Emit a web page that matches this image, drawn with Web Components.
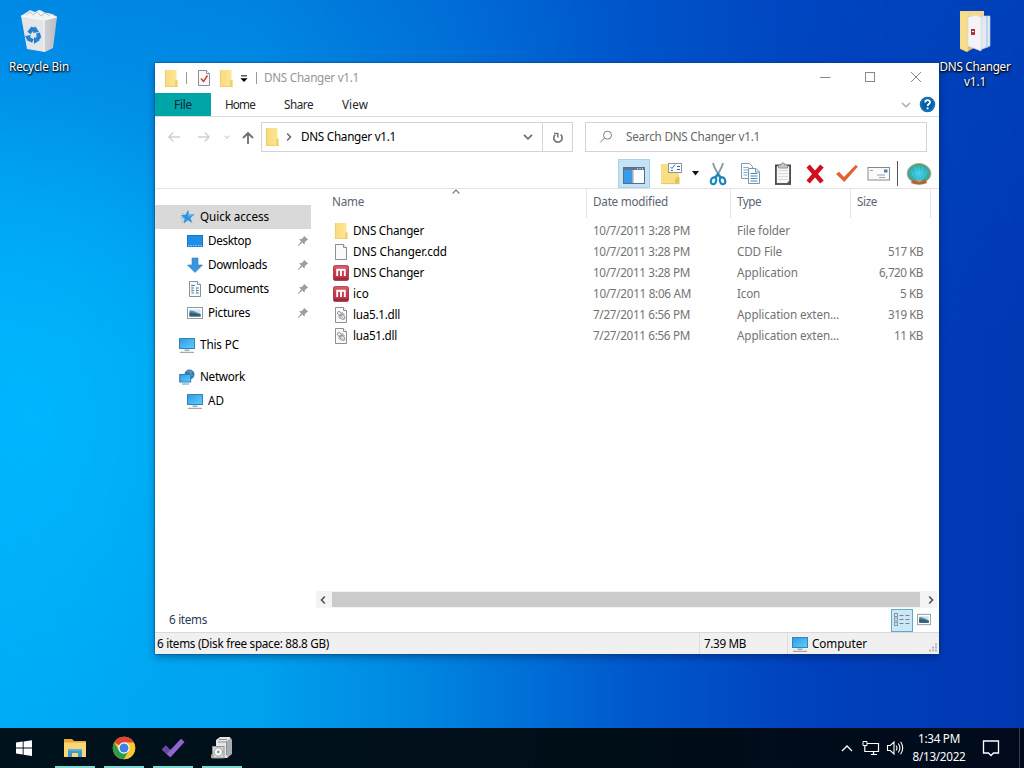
<!DOCTYPE html>
<html lang="en">
<head>
<meta charset="utf-8">
<title>DNS Changer v1.1</title>
<style>
html,body{margin:0;height:768px;overflow:hidden}
body{font:11.7px/16px "Noto Sans","Open Sans",sans-serif;color:#000}
</style>
</head>
<body>
<win-desktop></win-desktop>
<script>
const MON = `<linearGradient id="m" x1="0" y1="0" x2="1" y2="1"><stop stop-color="#2e9be4"/><stop offset="1" stop-color="#62cdfb"/></linearGradient>`;
const FOLDER = `<linearGradient id="f" x1="0" x2="1"><stop stop-color="#f8da80"/><stop offset="1" stop-color="#ffe795"/></linearGradient><path d="M2 0h11.500v9.500h1V16H2z" fill="url(#f)"/><path d="M12.500 9.500h2V16h-2.500v-4z" fill="#f0d06c"/><path d="M2.400 0v16" stroke="#e8c970" stroke-width=".8"/><path d="M2 15.600h12.500" stroke="#e8c970" stroke-width=".8"/>`;
const PAGE = `<path d="M2.500 .5h8l3 3v12h-11z" fill="#fafafa" stroke="#8b8f94"/><path d="M10.500 .5v3h3" fill="#fff" stroke="#8b8f94"/>`;
const ICONS = {
 folder:[16,16,FOLDER],
 page:[16,16,PAGE],
 prop:[16,16,PAGE+`<path d="M5 8.500l2.500 3 4-6" fill="none" stroke="#c94a38" stroke-width="1.600"/>`],
 dll:[16,16,PAGE+`<g fill="none" stroke="#93989d"><ellipse cx="6.600" cy="6.600" rx="2.400" ry="1.600" transform="rotate(40 6.600 6.600)"/><ellipse cx="9.200" cy="9.800" rx="3" ry="2" transform="rotate(45 9.200 9.800)"/><path d="M5 9.500l2.500 2.500M9 5l2.500 3M7.500 7.500l3 4" stroke-width=".9"/></g>`],
 app:[16,16,`<linearGradient id="r" x1="0" y1="0" x2="0" y2="1"><stop stop-color="#e0606c"/><stop offset=".45" stop-color="#c8384a"/><stop offset="1" stop-color="#b43448"/></linearGradient><rect x=".4" y=".4" width="15.200" height="15.200" rx="2.200" fill="url(#r)" stroke="#8e2836" stroke-width=".8"/><path d="M1 13.800h14" stroke="#8a2a3c" stroke-width="1.400"/><path d="M4.200 11V4M8 11V5M11.800 11V5M3.300 4.800h9.400" fill="none" stroke="#fff" stroke-width="1.900"/>`],
 star:[16,16,`<path d="M9 1l1.400 4.700 5.200-.4-4.200 3.600 2 5.100-4.600-2.700-4 3.300.8-5.200L1.800 6.200l4.800-.5z" fill="#2f93dc"/><path d="M9 1l1.400 4.700 5.200-.4-6.500 3z" fill="#5db4ee"/><path d="M1.500 8.500l3.500 1M2.500 13l2.500-1.500M3 4.500l2.500.8" stroke="#7dbcea" stroke-width=".9"/>`],
 desktop:[16,16,`<rect x=".5" y="2.500" width="15" height="11" fill="#1e90ea" stroke="#1976c0"/><path d="M1 12.800h14" stroke="#b8e0fa" stroke-width=".9" stroke-dasharray="1.500 1"/>`],
 down:[16,16,`<path d="M5 1h6v7h4.500L8 15.500.5 8H5z" fill="#3c94dc" stroke="#2f7fc4" stroke-width=".6"/>`],
 doc:[16,16,PAGE+`<path d="M4.500 4.500h3.500M4.500 7h2.500M9 7h2.800M4.500 9.500h2.500M9 9.500h2.800M4.500 12h2.500M9 12h2.800" stroke="#4a88ad" stroke-width="1.200"/><path d="M5 3v8M9.500 6.500v6" stroke="#5b97b8" stroke-width=".6"/>`],
 pic:[16,16,`<rect x=".5" y="2.500" width="15" height="11" fill="#fff" stroke="#9199a2"/><path d="M2.500 4.500h11v7h-11z" fill="#cce4f4"/><path d="M2.500 5.500c3-.5 6 1.500 11 3.300v2.700h-11z" fill="#5f8fb0"/><path d="M2.500 7.500c3-.5 7 1.500 11 2v2h-11z" fill="#365e72"/>`],
 pc:[16,16,MON+`<rect x=".5" y="1.500" width="15" height="10" fill="url(#m)" stroke="#3882ba"/><path d="M5.500 13.200h5" stroke="#74aed0" stroke-width="1.400"/><path d="M1 15.300h14" stroke="#9b8f94" stroke-width="1"/>`],
 net:[16,16,MON+`<circle cx="10.500" cy="5.500" r="5" fill="#3c77a9"/><path d="M8 2l3 1 1 3 2 1M11 1l2 3" stroke="#6fa3c8" stroke-width="1" fill="none"/><rect x=".7" y="5.500" width="11" height="7.500" fill="url(#m)" stroke="#2e7fbd"/><path d="M3 15h7" stroke="#5c95b8" stroke-width="1"/>`],
 pin:[12,12,`<path d="M7 .8l4.200 4-1.700.6-1.700 1.800-.2 2.600L5.400 7.600 1.200 11l-.4-.4 3.400-4.200L2 4.200l2.800-.2 1.700-1.700z" fill="#9a9ea2"/>`],
 back:[14,12,`<path d="M13 6H2M6.300 1.500L1.800 6l4.500 4.500" fill="none" stroke="#cfcfcf" stroke-width="1.300"/>`],
 fwd:[14,12,`<path d="M1 6h11M7.700 1.500L12.200 6l-4.500 4.500" fill="none" stroke="#cfcfcf" stroke-width="1.300"/>`],
 up:[14,14,`<path d="M7 13V2.500M2 7l5-5 5 5" fill="none" stroke="#6e6e6e" stroke-width="1.800"/>`],
 chev:[10,6,`<path d="M1 .8l4 4 4-4" fill="none" stroke="currentColor" stroke-width="1.700"/>`],
 right:[6,10,`<path d="M1.200 1.500L4.500 5 1.200 8.500" fill="none" stroke="currentColor" stroke-width="1.600"/>`],
 sort:[8,5,`<path d="M.6 4.500L4 1l3.400 3.500" fill="none" stroke="#777" stroke-width="1.100"/>`],
 refresh:[12,12,`<path d="M3.200 2.800A4.200 4.200 0 1 0 8.600 2.700" fill="none" stroke="#777" stroke-width="1.700"/><path d="M2 1.600h3.800v3.800" fill="none" stroke="#777" stroke-width="1.500"/>`],
 search:[14,14,`<circle cx="8.500" cy="5.200" r="4" fill="none" stroke="#808080"/><path d="M5.600 8L1.200 12.500" stroke="#808080"/>`],
 menu:[8,8,`<path d="M1 .8h6" stroke="#333" stroke-width="1.200"/><path d="M.4 3.300h7.200L4 7z" fill="#000"/>`],
 tri:[8,5,`<path d="M0 0h8L4 4.600z" fill="#111"/>`],
 min:[12,12,`<path d="M1 6.500h10.500" stroke="#888"/>`],
 max:[12,12,`<rect x="1.500" y="1.500" width="9" height="9" fill="none" stroke="#888"/>`],
 close:[12,12,`<path d="M1 1l10 10M11 1L1 11" stroke="#858585"/>`],
 help:[18,18,`<circle cx="9" cy="9" r="8.200" fill="#075fa8"/><circle cx="9" cy="9" r="7" fill="none" stroke="#2884c4"/><path d="M6.500 7c0-3.400 5.200-3.200 5.200-.4 0 1.900-2.600 1.900-2.600 4" fill="none" stroke="#fff" stroke-width="1.900"/><circle cx="9.100" cy="13" r="1.200" fill="#fff"/>`],
 pane:[24,20,`<rect x="1.500" y="1.500" width="21" height="16" fill="#fff" stroke="#5c6f80"/><path d="M1.500 3h21" stroke="#60788c" stroke-width="2"/><path d="M2 4h8.500v13H2z" fill="#379bea"/><path d="M11 4v13" stroke="#8a9aa8"/><path d="M15 2.800h1M17.500 2.800h1M20 2.800h1" stroke="#fff"/>`],
 select:[24,24,`<path d="M1 2h18v20H1z" fill="#fadf82"/><path d="M17 15h2.500v7H15v-4z" fill="#e5c357"/><path d="M1 21.600h18" stroke="#e5c770"/><rect x="8.500" y="1.500" width="13" height="9" fill="#fff" stroke="#8896a4"/><path d="M10.500 5l1.500 1.500 3-4M17 4.500h3M17 7.500h3M11 8.500h2" stroke="#3e6d9d" fill="none"/>`],
 cut:[20,24,`<path d="M5 1l1.300 4 5.700 11M15 1l-1.300 4-5.700 11" fill="none" stroke="#8b98a3" stroke-width="1.900"/><g fill="none" stroke="#1485bd" stroke-width="2.100"><ellipse cx="5.500" cy="18.800" rx="2.600" ry="3.500" transform="rotate(20 5.500 18.800)"/><ellipse cx="14.500" cy="18.800" rx="2.600" ry="3.500" transform="rotate(-20 14.500 18.800)"/><path d="M7 15.500l3-3.500 3 3.500"/></g>`],
 copy:[22,24,`<path d="M1.500 1.500h8l3 3v12h-11z" fill="#fff" stroke="#8799a8"/><path d="M3.500 5.500h5M3.500 8h6M3.500 10.500h4M3.500 13h4" stroke="#7aaccf"/><path d="M8.500 6.500h7.500l3.500 3.500v11.500h-11z" fill="#fff" stroke="#7e93a5"/><path d="M15.500 6.500V10h4" fill="none" stroke="#7e93a5"/><path d="M10.500 11.500h7M10.500 14h7M10.500 16.500h7M10.500 19h7" stroke="#3c8bc5"/>`],
 paste:[18,24,`<rect x="1.900" y="3.400" width="14.200" height="18.600" fill="#f7f7f7" stroke="#4a4a4a" stroke-width="1.800"/><path d="M4 8.500h10M4 11.500h10M4 14.500h10M4 17.500h10" stroke="#d6dde2"/><path d="M4.500 6V3H7l1-2h2l1 2h2.500v3z" fill="#c6cacc" stroke="#7f8285" stroke-width=".8"/><path d="M12 22l4-4v4z" fill="#555"/>`],
 del:[20,20,`<path d="M1.500 3.600L4.800.6l5.200 6 5.200-6L18.700 3.600 13 10l5.700 6.400-3.400 3-5.300-6-5.200 6-3.300-3L7 10z" fill="#d20f20"/>`],
 check:[24,20,`<path d="M1 10.500l3-2.400 5 5.600L20.500 1 23 2.700 9.300 19z" fill="#e2622e"/>`],
 mail:[24,16,`<rect x="1" y="1.500" width="21.500" height="12.500" fill="#fafafa" stroke="#85898f"/><rect x="17" y="3.500" width="3.500" height="3" fill="#4d83b4"/><path d="M3 4.500h3M10 9h8M12 11.500h6" stroke="#97a3b3"/>`],
 shell:[26,24,`<radialGradient id="s" cx=".5" cy=".55"><stop stop-color="#45cdf0"/><stop offset=".65" stop-color="#2cb5bf"/><stop offset="1" stop-color="#5a9a78"/></radialGradient><path d="M6 19C2 17 .5 13 1.500 9.500 2.500 5.500 7 1.500 13 1.500s10.500 4 11.500 8C25.500 13 24 17 20 19z" fill="url(#s)" stroke="#9aa878" stroke-width=".8"/><path d="M11 19L5 9M12 19L9 5M13 19V4M14 19l3-14M15 19l6-10" stroke="#60dcea" stroke-opacity=".5" fill="none"/><path d="M6 18h3q4 3 8 0h3l1 3q-8 3.500-16 0z" fill="#b0683a"/>`],
 details:[18,14,`<g fill="none" stroke="#8a93a8"><rect x="1.500" y=".5" width="3" height="3"/><rect x="1.500" y="5" width="3" height="3"/><rect x="1.500" y="9.500" width="3" height="3"/></g><path d="M6.500 2.500h4M12.500 2.500h4M6.500 6.500h4M12.500 6.500h4M6.500 10.500h4M12.500 10.500h4" stroke="#71868f" stroke-width="1.200"/>`],
 grip:[10,10,`<path d="M7 1.500h2M4 4.500h2M7 4.500h2M1 7.500h2M4 7.500h2M7 7.500h2" stroke="#b6b6b6" stroke-width="2"/>`],
 bin:[42,46,`<linearGradient id="b" x1="0" x2="1"><stop stop-color="#e2e5e8"/><stop offset=".62" stop-color="#e4e6e9"/><stop offset=".66" stop-color="#cdd1d4"/><stop offset="1" stop-color="#b9bdc1"/></linearGradient><path d="M3 8l5-3 4-3 5 2 5-2 6 3 7 1 4 3-4 31-8 4-18-3z" fill="url(#b)"/><path d="M3 8l23 4 13-3-9-4-5 0-4-3-5 3-5-2z" fill="#f1f3f4"/><path d="M8 7l4-3 3 3 4-3 4 4 4-3 5 3" fill="none" stroke="#bcc2c8"/><path d="M3 8l23 4 13-3M26 12v32" fill="none" stroke="#f9fafb"/><g fill="none" stroke="#267fd0" stroke-width="4"><path d="M11 25l3-4 4 1M20 25l1 4-2 2M15 33l-4-2-1-2"/></g><path d="M17 18l4 6-6 1zM16 29v7l6-4zM7 28l6-1-3 6z" fill="#267fd0"/>`],
 bigfolder:[34,44,`<path d="M2 1h24v31L9 42l-7-3z" fill="#e2bd62"/><path d="M3 1h23v5H10v35l-7-3z" fill="#f5d986"/><path d="M23 6l9 0v30l-10 4z" fill="#e3e9ef" stroke="#c4ccd5" stroke-width=".6"/><path d="M29 6v32" stroke="#8cc2ef"/><path d="M10 7l8-2 5 2v34L10 36z" fill="#f4f4f6" stroke="#d3d6d9" stroke-width=".6"/><path d="M2 1l7 3v38l-7-4z" fill="#f6dc8d"/><rect x="13" y="19" width="4" height="6" fill="#bd2f39"/><path d="M14 21.500h2" stroke="#fff"/>`],
 start:[18,18,`<path d="M1 3.600l6.700-1v6H1zM8.600 2.400L17 1.200v7.400H8.600zM1 9.500h6.700v6L1 14.500zM8.600 9.500H17V17l-8.400-1.300z" fill="#fff"/>`],
 explorer:[24,20,`<path d="M1 1h8l2 2h12v16H1z" fill="#e9aa35"/><path d="M1 4.500h22V19H1z" fill="#fbd674"/><path d="M5 19v-8h14v8h-4v-4H9v4z" fill="#3c9acf"/><path d="M5 11h14v2H5z" fill="#57b3dd"/>`],
 chrome:[24,24,`<circle cx="12" cy="12" r="11.200" fill="#fbc72e"/><path d="M12 12L2.300 6.400A11.200 11.200 0 0 1 21.700 6.400L12 6.400z" fill="#e14335"/><path d="M12 .8a11.200 11.200 0 0 1 9.700 5.600H12z" fill="#e14335"/><path d="M2.300 6.400A11.200 11.200 0 0 0 12 23.200l4.900-8.400L7.200 14.800z" fill="#2b9a4b"/><path d="M12 6.400h9.700A11.200 11.200 0 0 1 12 23.200l4.900-8.400z" fill="#fbc72e"/><circle cx="12" cy="12" r="5.700" fill="#fff"/><circle cx="12" cy="12" r="4.500" fill="#3b80ec"/>`],
 todo:[24,20,`<path d="M.8 11.500l4-4 4.500 4.500L20 .8 23.500 4 9.300 19.500z" fill="#9265cc"/><path d="M.8 11.500l4-4 4.500 4.500-3.700 4z" fill="#6b45a4"/>`],
 disc:[24,24,`<path d="M6 4l4-3h10l1 3v14l-4 4H6z" fill="#e4e6e7"/><path d="M17 5l4-3 1 2v14l-5 4z" fill="#a9adb0"/><path d="M9 3.500h8M8 6h8M16.500 5v14" stroke="#8b8d90"/><rect x="2.500" y="10.500" width="11.500" height="11.500" fill="#d8d9d9" stroke="#909296"/><circle cx="8.300" cy="16" r="4.200" fill="#fafafa" stroke="#96999b"/><circle cx="8.300" cy="16" r="1.400" fill="#8f9598"/><path d="M1 18.500h3v3.500H1z" fill="#b7a981"/>`],
 trayup:[12,8,`<path d="M1 7l5-5 5 5" fill="none" stroke="#fff" stroke-width="1.300"/>`],
 lan:[18,16,`<path d="M5 3.500h11.500v8H6M9 14.500h6M11.500 11.500v3M2.800 6v5.500h3.700" fill="none" stroke="#fff" stroke-width="1.200"/><path d="M1 1.500h4v4H1z" fill="#071019" stroke="#fff"/>`],
 vol:[18,16,`<path d="M1.500 5.500h2.800L8 2v12l-3.700-3.500H1.500zM10 5.500q2 2.500 0 5M12.300 3.500q3.200 4.500 0 9M14.600 1.800q4.200 6.200 0 12.400" fill="none" stroke="#fff" stroke-width="1.100"/>`],
 note:[18,18,`<path d="M1.500 2h15v12h-5l-2.500 2.500L6.500 14h-5z" fill="none" stroke="#fff" stroke-width="1.300"/>`]
};

// <win-icon name w h>: inline SVG from the table above
customElements.define('win-icon', class extends HTMLElement{
  constructor(){super();this.attachShadow({mode:'open'})}
  connectedCallback(){
    const [vw,vh,body]=ICONS[this.getAttribute('name')];
    const w=this.getAttribute('w')||vw,h=this.getAttribute('h')||vh;
    this.shadowRoot.innerHTML=`<style>:host{display:block;flex:none;width:${w}px;height:${h}px}svg{display:block}</style><svg width="${w}" height="${h}" viewBox="0 0 ${vw} ${vh}" preserveAspectRatio="none">${body}</svg>`;
  }
});

// <fit-label w>: one line of text tracked to a given advance width
customElements.define('fit-label', class extends HTMLElement{
  constructor(){super();this.attachShadow({mode:'open'}).innerHTML=`<style>:host{display:block;flex:none;white-space:nowrap;margin-top:-1px;margin-bottom:1px}span{display:inline-block;white-space:nowrap}</style><span><slot></slot></span>`}
  connectedCallback(){
    const w=+this.getAttribute('w'),s=this.shadowRoot.querySelector('span');
    const n=this.textContent.length;
    s.style.letterSpacing='0px';
    s.style.letterSpacing=((w-s.getBoundingClientRect().width)/n).toFixed(3)+'px';
  }
});

const define=(tag,css,html)=>customElements.define(tag,class extends HTMLElement{
  constructor(){super();this.attachShadow({mode:'open'})}
  connectedCallback(){
    this.shadowRoot.innerHTML=`<style>:host{box-sizing:border-box}*{box-sizing:border-box}${css}</style>${typeof html==='function'?html(this):html}`;
  }
});
const I=(n,w,h)=>`<win-icon name="${n}"${w?` w="${w}" h="${h}"`:''}></win-icon>`;
const L=(t,w,c='')=>`<fit-label w="${w}" class="${c}">${t}</fit-label>`;

define('title-bar',`:host{display:flex;height:30px;align-items:center;padding:0 17px 0 8px;color:#959595}
 .sep{width:1px;height:12px;background:#999;flex:none}.grow{flex:1}.t{margin-left:7px}.w{display:flex;margin-top:-2px}`,
 `${I('folder',16,17)}<i class="sep" style="margin:0 9px 0 7px"></i>${I('prop')}<i style="width:6px"></i>${I('folder',16,17)}<i style="width:6px"></i><span style="padding-top:2px">${I('menu')}</span><i class="sep" style="margin-left:8px"></i>${L('DNS Changer v1.1',95,'t')}<span class="grow"></span><span class="w">${I('min')}<i style="width:33px"></i>${I('max')}<i style="width:34px"></i>${I('close')}</span>`);

define('ribbon-tabs',`:host{display:flex;height:24px;border-bottom:1px solid #dadada;color:#262626;align-items:center;padding-right:3px}
 .f{width:56px;height:23px;background:#00a5a8;display:grid;place-items:center;color:#123}.grow{flex:1}.c{color:#b4b4b4;margin-right:8px}`,
 `<div class="f">${L('File',18)}</div><i style="width:14px"></i>${L('Home',30)}<i style="width:29px"></i>${L('Share',29)}<i style="width:29px"></i>${L('View',26)}<span class="grow"></span><div class="c">${I('chev',10,6)}</div>${I('help',17,17)}`);

define('address-row',`:host{display:flex;height:41px;padding:5px 12px 6px 12px;align-items:center}
 .box{border:1px solid #d4d4d4;height:30px;display:flex;align-items:center}.a{width:312px;margin-left:6px;padding-left:2px;color:#6e6e6e}.a fit-label{color:#000}
 .grow{flex:1}.r{height:28px;width:30px;border-left:1px solid #d4d4d4;display:grid;place-items:center;padding-top:2px}.s{width:342px;margin-left:12px;padding-left:13px;color:#686868}.x{color:#cfcfcf;margin:0 11px 0 13px}`,
 `${I('back')}<i style="width:16px"></i>${I('fwd')}<div class="x">${I('chev',6,4)}</div><div style="padding-top:2px">${I('up')}</div>
 <div class="box a">${I('folder',16,18)}<i style="width:6px"></i>${I('right')}<i style="width:9px"></i>${L('DNS Changer v1.1',95)}<span class="grow"></span>${I('chev')}<i style="width:9px"></i><div class="r">${I('refresh')}</div></div>
 <div class="box s">${I('search')}<i style="width:13px"></i>${L('Search DNS Changer v1.1',134)}</div>`);

define('tool-bar',`:host{display:flex;height:31px;align-items:center;justify-content:flex-end;padding:1px 7px 0 0;border-bottom:1px solid #e3e3e3}
 .on{width:32px;height:29px;background:#c5e3f7;border:1px solid #a8d2ee;display:grid;place-items:center;padding-top:4px}.sep{width:1px;height:25px;background:#555}`,
 `<div class="on">${I('pane')}</div><i style="width:10px"></i>${I('select')}<i style="width:8px"></i>${I('tri',7,5)}<i style="width:9px"></i>${I('cut')}<i style="width:12px"></i>${I('copy')}<i style="width:12px"></i>${I('paste')}<i style="width:13px"></i>${I('del')}<i style="width:10px"></i>${I('check',24,19)}<i style="width:8px"></i>${I('mail')}<i style="width:6px"></i><i class="sep"></i><i style="width:8px"></i>${I('shell')}`);

define('nav-item',`:host{display:flex;height:24px;width:156px;align-items:center;gap:5px;padding:0 2px 0 24px}
 :host([child]){padding-left:32px}:host([on]){background:#d9d9d9}.grow{flex:1}`,
 e=>`${I(e.getAttribute('icon'))}${L(e.getAttribute('label'),e.getAttribute('w'))}<span class="grow"></span>${e.hasAttribute('pinned')?I('pin'):''}`);

define('nav-pane',`:host{display:flex;flex-direction:column;width:161px;padding-top:16px}.gap{height:8px}`,
 `<nav-item on icon="star" label="Quick access" w="69"></nav-item>
 <nav-item child pinned icon="desktop" label="Desktop" w="43"></nav-item>
 <nav-item child pinned icon="down" label="Downloads" w="59"></nav-item>
 <nav-item child pinned icon="doc" label="Documents" w="61"></nav-item>
 <nav-item child pinned icon="pic" label="Pictures" w="42"></nav-item><div class="gap"></div>
 <nav-item icon="pc" label="This PC" w="39"></nav-item><div class="gap"></div>
 <nav-item icon="net" label="Network" w="45"></nav-item>
 <nav-item child icon="pc" label="AD" w="16"></nav-item>`);

const COLS='grid-template-columns:271px 144px 120px 80px';
define('file-row',`:host{display:grid;${COLS};height:21px;align-items:center;color:#737373}
 .n{display:flex;gap:4px;padding-left:17px;color:#000;align-items:center}.c{padding-left:6px}.s{justify-self:end;padding-right:8px}.c,.s{display:flex}`,
 e=>{const a=k=>e.getAttribute(k)||'';const c=(k)=>{const [t,w]=a(k).split('|');return t?L(t,w):''};
 return `<div class="n">${I(a('icon'))}${c('name')}</div><div class="c">${c('date')}</div><div class="c">${c('type')}</div><div class="s">${c('size')}</div>`});

define('file-list',`:host{display:flex;flex-direction:column;flex:1}
 .h{display:grid;${COLS};height:29px;color:#5a6472;position:relative}.h>div{border-right:1px solid #e4e4e4;padding:5px 0 0 6px}.h>div:first-child{padding-left:16px}
 .sort{position:absolute;left:136px;top:0}.rows{padding-top:2px;flex:1}
 .bar{height:17px;background:#f4f4f4;display:flex;align-items:center;padding:0 3px 0 4px;color:#505050;margin-right:2px}.thumb{flex:1;height:15px;background:#cbcbcb;margin:0 8px 0 6px}`,
 `<div class="h"><div>${L('Name',32)}</div><div>${L('Date modified',75)}</div><div>${L('Type',24)}</div><div>${L('Size',20)}</div><span class="sort">${I('sort')}</span></div>
 <div class="rows">
 <file-row icon="folder" name="DNS Changer|71" date="10/7/2011 3:28 PM|97" type="File folder|53"></file-row>
 <file-row icon="page" name="DNS Changer.cdd|94" date="10/7/2011 3:28 PM|97" type="CDD File|45" size="517 KB|35"></file-row>
 <file-row icon="app" name="DNS Changer|71" date="10/7/2011 3:28 PM|97" type="Application|61" size="6,720 KB|44"></file-row>
 <file-row icon="app" name="ico|16" date="10/7/2011 8:06 AM|98" type="Icon|23" size="5 KB|23"></file-row>
 <file-row icon="dll" name="lua5.1.dll|47" date="7/27/2011 6:56 PM|97" type="Application exten...|102" size="319 KB|35"></file-row>
 <file-row icon="dll" name="lua51.dll|44" date="7/27/2011 6:56 PM|97" type="Application exten...|102" size="11 KB|29"></file-row></div>
 <div class="bar"><span style="transform:scaleX(-1)">${I('right')}</span><div class="thumb"></div>${I('right')}</div>`);

define('info-bar',`:host{display:flex;height:24px;align-items:center;padding:0 8px 0 14px;color:#2d3a50}.grow{flex:1}
 .on{width:22px;height:23px;background:#cce8f7;border:1px solid #5eaac8;display:grid;place-items:center;margin-right:4px}`,
 `${L('6 items',38)}<span class="grow"></span><div class="on">${I('details')}</div><span style="margin-top:-2px">${I('pic',14,15)}</span>`);

define('status-bar',`:host{display:grid;grid-template-columns:544px 88px 1fr;height:22px;background:#f0f0f0;border-top:1px solid #d9d9d9;position:relative}
 div{display:flex;align-items:center;gap:4px;padding-left:4px}div+div{border-left:1px solid #dcdcdc}.g{position:absolute;right:1px;bottom:1px}`,
 `<div style="padding-left:2px">${L('6 items (Disk free space: 88.8 GB)',172)}</div><div>${L('7.39 MB',42)}</div><div>${I('pc')}${L('Computer',55)}</div><span class="g">${I('grip')}</span>`);

define('explorer-window',`:host{display:flex;flex-direction:column;width:784px;height:591px;background:#fff;box-shadow:0 0 0 1px rgba(0,60,120,.35),0 3px 8px rgba(0,0,40,.35)}.main{display:flex;flex:1;min-height:0}`,
 `<title-bar></title-bar><ribbon-tabs></ribbon-tabs><address-row></address-row><tool-bar></tool-bar><div class="main"><nav-pane></nav-pane><file-list></file-list></div><info-bar></info-bar><status-bar></status-bar>`);

define('desk-icon',`:host{display:flex;flex-direction:column;align-items:center;width:78px;color:#fff;text-shadow:0 1px 2px #000,1px 1px 2px #000;line-height:15px}.l{margin-top:5px;display:grid;justify-items:center}.l fit-label{margin:0}`,
 e=>`${I(e.getAttribute('icon'))}<div class="l">${e.getAttribute('label').split(';').map(s=>L(...s.split('|'))).join('')}</div>`);

define('task-bar',`:host{display:flex;height:40px;background:linear-gradient(90deg,#00121c,#000e18 60%,#000a1c);color:#fff;align-items:center}
 .b{width:40px;height:40px;margin-right:9px;display:grid;place-items:center;border-bottom:2px solid #7cd8d4;padding-top:2px}.s{width:48px;display:grid;place-items:center}.grow{flex:1}
 .c{width:56px;display:grid;justify-items:center;line-height:18px}.e{width:1px;height:40px;background:#34404d}`,
 `<div class="s">${I('start')}</div><i style="width:7px"></i><div class="b">${I('explorer')}</div><div class="b">${I('chrome')}</div><div class="b">${I('todo')}</div><div class="b">${I('disc')}</div>
 <span class="grow"></span>${I('trayup')}<i style="width:9px"></i>${I('lan')}<i style="width:6px"></i>${I('vol')}<i style="width:7px"></i><div class="c">${L('1:34 PM',42)}${L('8/13/2022',53)}</div><i style="width:15px"></i>${I('note')}<i style="width:19px"></i><i class="e"></i><i style="width:4px"></i>`);

define('win-desktop',`:host{display:grid;width:1024px;height:768px;grid-template-rows:728px 40px;overflow:hidden;
 background:linear-gradient(90deg,#00abf6 0,#00a2ee 25%,#0084e0 42%,#0058cc 62%,#0040bc 80%,#0038b2 100%)}
 .area{position:relative;background:radial-gradient(ellipse 220px 330px at 30px 420px,rgba(0,184,255,.85),rgba(0,180,255,0)),linear-gradient(180deg,rgba(0,76,200,.36),rgba(0,82,205,0) 48%)}
 .area>*{position:absolute}`,
 `<div class="area"><desk-icon style="left:0;top:8px" icon="bin" label="Recycle Bin|60"></desk-icon>
 <explorer-window style="left:155px;top:63px"></explorer-window>
 <desk-icon style="left:936px;top:10px" icon="bigfolder" label="DNS Changer|71;v1.1|22"></desk-icon></div><task-bar></task-bar>`);
</script>
</body>
</html>
